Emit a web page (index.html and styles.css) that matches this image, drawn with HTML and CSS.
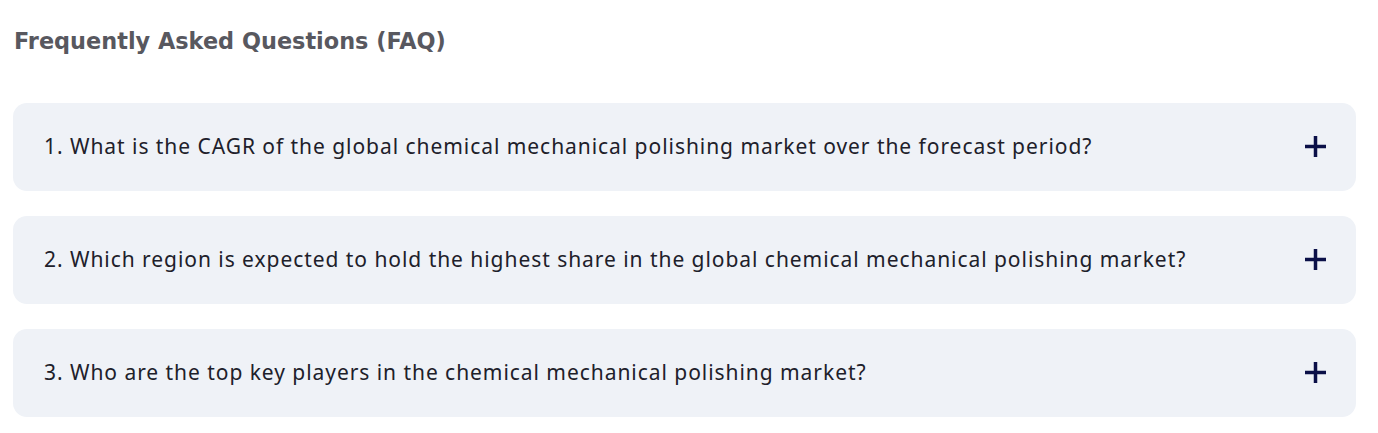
FILE: index.html
```html
<!DOCTYPE html>
<html lang="en">
<head>
<meta charset="utf-8">
<title>FAQ</title>
<link rel="stylesheet" href="styles.css">
</head>
<body>
<section class="faq">
  <h2 class="faq-title">Frequently Asked Questions (FAQ)</h2>
  <div class="faq-list">
    <div class="faq-item">
      <span class="faq-q">1. What is the CAGR of the global chemical mechanical polishing market over the forecast period?</span>
      <svg class="faq-icon" width="21" height="21" viewBox="0 0 21 21"><path d="M10.5 0V21M0 10.5H21" stroke="#0b1048" stroke-width="3.5" fill="none"/></svg>
    </div>
    <div class="faq-item">
      <span class="faq-q">2. Which region is expected to hold the highest share in the global chemical mechanical polishing market?</span>
      <svg class="faq-icon" width="21" height="21" viewBox="0 0 21 21"><path d="M10.5 0V21M0 10.5H21" stroke="#0b1048" stroke-width="3.5" fill="none"/></svg>
    </div>
    <div class="faq-item">
      <span class="faq-q">3. Who are the top key players in the chemical mechanical polishing market?</span>
      <svg class="faq-icon" width="21" height="21" viewBox="0 0 21 21"><path d="M10.5 0V21M0 10.5H21" stroke="#0b1048" stroke-width="3.5" fill="none"/></svg>
    </div>
  </div>
</section>
</body>
</html>
```
FILE: styles.css
```css
html, body {
  margin: 0;
  padding: 0;
  background: #ffffff;
}
.faq {
  padding: 0 22px 0 13px;
}
.faq-title {
  margin: 0;
  padding-top: 26px;
  padding-left: 1px;
  font-family: "DejaVu Sans", sans-serif;
  font-weight: 700;
  font-size: 22.4px;
  line-height: 30px;
  color: #58585f;
}
.faq-list {
  display: flex;
  flex-direction: column;
  gap: 25px;
  margin-top: 47px;
}
.faq-item {
  display: flex;
  align-items: center;
  justify-content: space-between;
  height: 88px;
  padding: 0 30px 2px 31px;
  background: #eff2f7;
  border-radius: 14px;
  box-sizing: border-box;
}
.faq-q {
  font-family: "Noto Sans", sans-serif;
  font-size: 21px;
  letter-spacing: 0.95px;
  color: #20202a;
}
.faq-icon {
  display: block;
}
```
